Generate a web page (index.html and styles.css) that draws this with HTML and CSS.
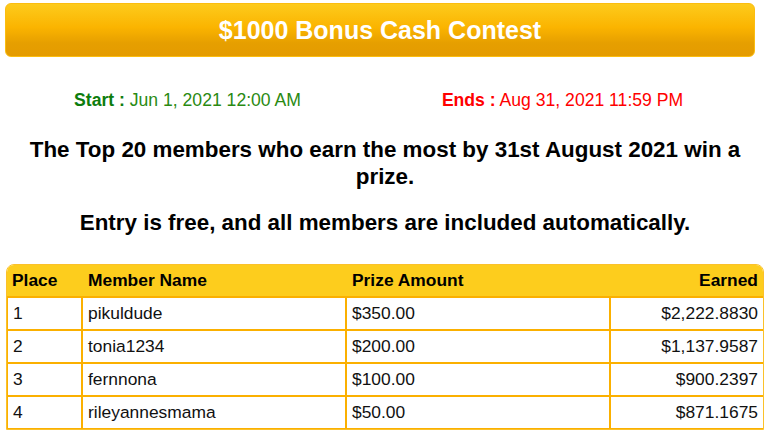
FILE: index.html
```html
<!DOCTYPE html>
<html>
<head>
<meta charset="utf-8">
<link rel="stylesheet" href="styles.css">
</head>
<body>
<div class="page">
  <div class="banner">$1000 Bonus Cash Contest</div>
  <div class="dates">
    <div class="date start"><b>Start :</b> Jun 1, 2021 12:00 AM</div>
    <div class="date ends"><b>Ends :</b> Aug 31, 2021 11:59 PM</div>
  </div>
  <h2 class="intro">The Top 20 members who earn the most by 31st August 2021 win a prize.</h2>
  <h2 class="intro second">Entry is free, and all members are included automatically.</h2>
  <table class="board">
    <thead>
      <tr><th class="c-place">Place</th><th class="c-name">Member Name</th><th class="c-prize">Prize Amount</th><th class="c-earned">Earned</th></tr>
    </thead>
    <tbody>
      <tr><td>1</td><td>pikuldude</td><td>$350.00</td><td class="num">$2,222.8830</td></tr>
      <tr><td>2</td><td>tonia1234</td><td>$200.00</td><td class="num">$1,137.9587</td></tr>
      <tr><td>3</td><td>fernnona</td><td>$100.00</td><td class="num">$900.2397</td></tr>
      <tr><td>4</td><td>rileyannesmama</td><td>$50.00</td><td class="num">$871.1675</td></tr>
    </tbody>
  </table>
</div>
</body>
</html>
```
FILE: styles.css
```css
html, body {
  margin: 0;
  padding: 0;
  background: #fff;
}
body {
  font-family: "Liberation Sans", Arial, sans-serif;
  color: #111;
}
.page {
  padding: 3px 0 0 0;
}
.banner {
  width: 750px;
  height: 54px;
  margin-left: 5px;
  box-sizing: border-box;
  border: 1px solid #fbbd10;
  border-radius: 6px;
  background: linear-gradient(to bottom, #fdcb1c 0%, #fbb400 45%, #e69f00 75%, #e49b00 100%);
  color: #fff;
  font-weight: bold;
  font-size: 25px;
  line-height: 52px;
  text-align: center;
}
.dates {
  display: flex;
  width: 750px;
  margin-top: 32px;
  font-size: 17.6px;
  line-height: 22px;
}
.date {
  flex: 1;
  text-align: center;
}
.start {
  color: #2a8a12;
}
.start b { color: #0d7d0d; }
.ends {
  color: #ff0000;
}
.intro {
  margin: 25px 0 0 0;
  padding: 0 18px;
  font-size: 22.4px;
  line-height: 27px;
  font-weight: bold;
  text-align: center;
  color: #000;
}
.intro.second {
  margin-top: 19px;
}
.board {
  margin-top: 28px;
  margin-left: 6px;
  width: 758px;
  border-collapse: separate;
  border-spacing: 0;
  border: 1px solid #fbc12a;
  border-radius: 8px 8px 0 0;
  overflow: hidden;
  font-size: 17.4px;
}
.board th {
  background: #fdcd1d;
  text-align: left;
  font-weight: bold;
  height: 31px;
  padding: 0 5px;
  color: #000;
  border-bottom: 1px solid #fbb000;
}
.board th.c-earned { text-align: right; }
.board td {
  height: 31px;
  padding: 0 5px;
  border-top: 1px solid #fbb000;
  border-right: 2px solid #fbb000;
  border-bottom: 1px solid #fbb000;
  color: #111;
}
.board td:last-child { border-right: none; }
.board td:first-child { border-left: 1px solid #fbb000; }
.board td.num { text-align: right; }
.c-place { width: 66px; }
.c-name { width: 254px; }
.c-prize { width: 254px; }
```
